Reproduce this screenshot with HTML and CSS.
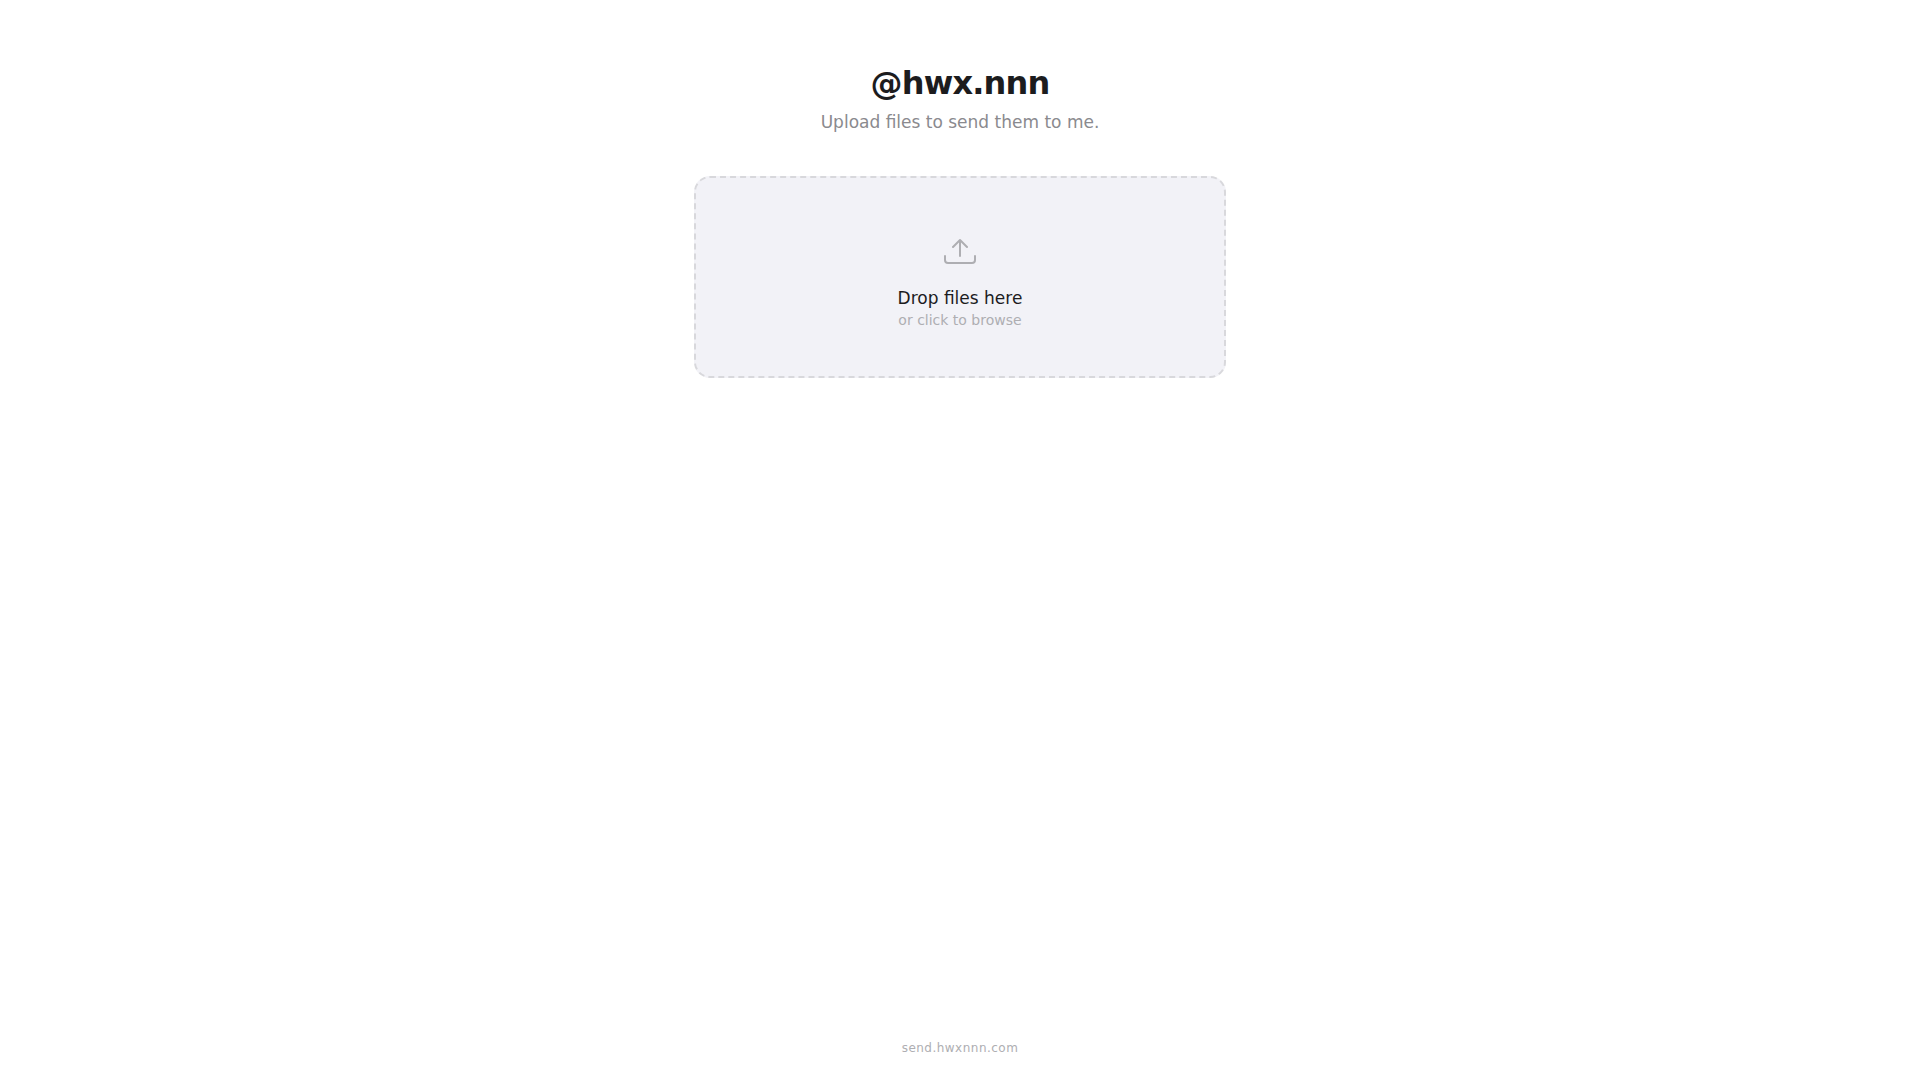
FILE: index.html
```html
<!DOCTYPE html>
<html lang="en">
<head>
  <meta charset="UTF-8">
  <meta name="viewport" content="width=device-width, initial-scale=1.0">
  <title>@hwx.nnn</title>
  <link rel="stylesheet" href="styles.css">
</head>
<body>
  <main class="container">
    <header>
      <h1>@hwx.nnn</h1>
      <p class="subtitle">Upload files to send them to me.</p>
    </header>

    <label class="drop-zone" for="fileInput">
      <svg class="drop-icon" viewBox="0 0 48 48" fill="none" stroke="currentColor" stroke-width="2" stroke-linecap="round" stroke-linejoin="round" aria-hidden="true">
        <path d="M24 30V14M17 21l7-7 7 7"/>
        <path d="M9 30v4a3 3 0 0 0 3 3h24a3 3 0 0 0 3-3v-4"/>
      </svg>
      <span class="drop-label">Drop files here</span>
      <span class="drop-hint">or click to browse</span>
      <input type="file" id="fileInput" multiple>
    </label>
  </main>

  <footer>send.hwxnnn.com</footer>
</body>
</html>
```

FILE: styles.css
```css
* {
  box-sizing: border-box;
  margin: 0;
  padding: 0;
}

body {
  font-family: "DejaVu Sans", sans-serif;
  background: #fff;
  color: #1c1c1e;
  min-height: 100vh;
  display: flex;
  flex-direction: column;
  align-items: center;
  padding: 64px 24px 24px;
}

.container {
  width: 100%;
  max-width: 532px;
  flex: 1;
}

header {
  text-align: center;
  margin-bottom: 42px;
}

h1 {
  font-size: 32px;
  line-height: 38px;
  font-weight: 700;
  letter-spacing: -0.025em;
  margin-bottom: 8px;
}

.subtitle {
  font-size: 17px;
  line-height: 24px;
  color: #8a8a8e;
}

.drop-zone {
  display: flex;
  flex-direction: column;
  align-items: center;
  padding: 48px 24px 46px;
  background: #f2f2f7;
  border: 2px dashed #d8d8dc;
  border-radius: 16px;
  cursor: pointer;
}

.drop-zone:hover {
  border-color: #aeaeb2;
}

.drop-icon {
  width: 48px;
  height: 48px;
  color: #aeaeb2;
  margin-bottom: 12px;
}

.drop-label {
  font-size: 17px;
  line-height: 24px;
}

.drop-hint {
  font-size: 14px;
  line-height: 20px;
  color: #aeaeb2;
}

.drop-zone input {
  display: none;
}

footer {
  font-size: 12px;
  line-height: 16px;
  letter-spacing: 0.04em;
  color: #aeaeb2;
}
```
